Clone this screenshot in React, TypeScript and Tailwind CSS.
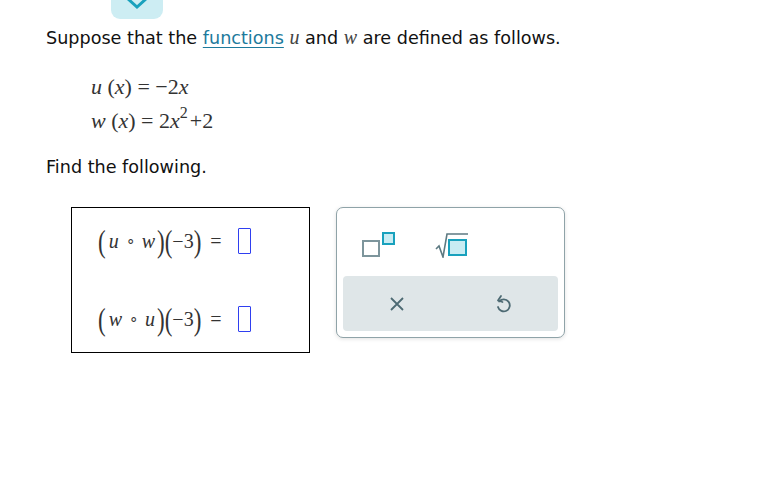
import React from "react";

const serif = { fontFamily: '"Liberation Serif", "Times New Roman", serif' };

function Paren({ ch }: { ch: string }) {
  return <span className="inline-block scale-y-[1.4] text-[23px] leading-none text-[#333]">{ch}</span>;
}

function AnswerRow({ a, b }: { a: string; b: string }) {
  return (
    <div className="flex items-center text-[20px] text-[#333]" style={serif}>
      <Paren ch="(" />
      <span className="italic ml-[3px]">{a}</span>
      <span className="mx-[7px] text-[15px]">∘</span>
      <span className="italic mr-[2px]">{b}</span>
      <Paren ch=")" />
      <Paren ch="(" />
      <span>−3</span>
      <Paren ch=")" />
      <span className="ml-[9px]">=</span>
      <div className="ml-[16px] w-[13px] h-[26px] border-[1.5px] border-[#2f3ff0] rounded-[1px]" />
    </div>
  );
}

export default function App() {
  return (
    <div className="min-h-screen bg-white" style={{ fontFamily: '"DejaVu Sans", Verdana, sans-serif' }}>
      {/* collapse toggle */}
      <div className="ml-[111px] w-[52px] h-[19px] rounded-b-[9px] bg-[#cdedf3] flex justify-center">
        <svg width="22" height="10" viewBox="0 0 22 10" className="-mt-[1px]">
          <path d="M2 0 L11 8 L20 0" fill="none" stroke="#19a1bd" strokeWidth="3" />
        </svg>
      </div>

      <p className="ml-[46px] mt-[6px] text-[17.6px] leading-[24px] text-[#111]">
        Suppose that the{" "}
        <span className="text-[#1d7a9c] underline underline-offset-[3px]">functions</span>{" "}
        <span className="italic text-[#444] text-[20px]" style={serif}>u</span> and{" "}
        <span className="italic text-[#444] text-[20px]" style={serif}>w</span> are defined as follows.
      </p>

      <div className="ml-[91px] mt-[20px] text-[22px] text-[#333] leading-[34px]" style={serif}>
        <div>
          <span className="italic">u</span> (<span className="italic">x</span>) = −2<span className="italic">x</span>
        </div>
        <div>
          <span className="italic">w</span> (<span className="italic">x</span>) = 2<span className="italic">x</span>
          <span className="text-[16px] relative -top-[10px]">2</span>
          <span className="ml-[2px]">+2</span>
        </div>
      </div>

      <p className="ml-[46px] mt-[15px] text-[17.6px] leading-[24px] text-[#111]">Find the following.</p>

      <div className="flex items-start mt-[28px] ml-[71px] gap-[26px]">
        <div className="w-[239px] h-[146px] border border-black flex flex-col justify-center gap-[48px] pl-[26px]">
          <AnswerRow a="u" b="w" />
          <AnswerRow a="w" b="u" />
        </div>

        <div className="w-[229px] h-[131px] rounded-[7px] border border-[#8fa3a8] bg-white shadow-[0_1px_4px_rgba(0,0,0,0.12)] p-[6px] flex flex-col">
          <div className="flex items-center h-[62px] pl-[19px] gap-[39px]">
            {/* superscript */}
            <svg width="34" height="26" viewBox="0 0 34 26">
              <rect x="1" y="9" width="16" height="15" fill="none" stroke="#7d959c" strokeWidth="2" />
              <rect x="21" y="1" width="11" height="11" fill="#c9ecf3" stroke="#19a1bd" strokeWidth="2" />
            </svg>
            {/* sqrt */}
            <svg width="34" height="26" viewBox="0 0 34 26">
              <path d="M1 17 L4 14 L8 25 L12 2 L33 2" fill="none" stroke="#5d7a82" strokeWidth="1.6" />
              <rect x="14" y="8" width="17" height="15" fill="#c9ecf3" stroke="#19a1bd" strokeWidth="2" />
            </svg>
          </div>
          <div className="flex-1 rounded-[4px] bg-[#dfe6e8] flex items-center justify-around">
            <svg width="16" height="16" viewBox="0 0 16 16" className="ml-[2px]">
              <path d="M2 2 L14 14 M14 2 L2 14" stroke="#4d6a73" strokeWidth="1.8" />
            </svg>
            <svg width="18" height="20" viewBox="0 0 18 20" className="mr-[2px]">
              <path d="M5.2 7.5 A6 6 0 1 1 4 13" fill="none" stroke="#4d6a73" strokeWidth="1.8" strokeLinecap="round" />
              <path d="M7 2 L4 6.5 L8.5 8" fill="none" stroke="#4d6a73" strokeWidth="1.8" strokeLinecap="round" strokeLinejoin="round" />
            </svg>
          </div>
        </div>
      </div>
    </div>
  );
}
